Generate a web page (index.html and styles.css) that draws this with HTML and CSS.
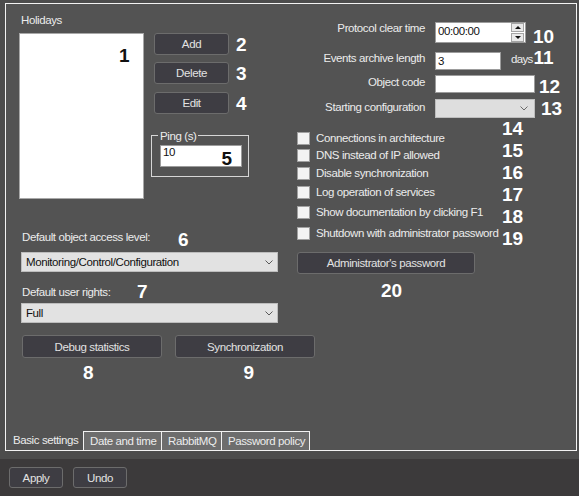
FILE: index.html
```html
<!DOCTYPE html>
<html>
<head>
<meta charset="utf-8">
<link rel="stylesheet" href="styles.css">
</head>
<body>
<div class="main">
  <div class="panel">
    <div class="content">
      <div class="left">
        <div class="holidays">Holidays</div>
        <div class="hol-row">
          <div class="listbox"><span class="ann ann1">1</span></div>
          <div class="hbtns">
            <div class="brow"><div class="btn b75">Add</div><span class="num nside">2</span></div>
            <div class="brow m7"><div class="btn b75">Delete</div><span class="num nside">3</span></div>
            <div class="brow m8"><div class="btn b75">Edit</div><span class="num nside">4</span></div>
            <div class="group">
              <span class="legend">Ping (s)</span>
              <div class="tbox ping-in">10<span class="ann ann5">5</span></div>
            </div>
          </div>
        </div>
        <div class="lrow r-access"><span class="ltext w-access">Default object access level:</span><span class="num n6">6</span></div>
        <div class="select s-left s1"><span>Monitoring/Control/Configuration</span><svg class="chev" width="8" height="5" viewBox="0 0 8 5"><path d="M0.5 0.5 L4 4 L7.5 0.5" fill="none" stroke="#5a5a5a" stroke-width="1"/></svg></div>
        <div class="lrow r-rights"><span class="ltext w-rights">Default user rights:</span><span class="num n7">7</span></div>
        <div class="select s-left s2"><span>Full</span><svg class="chev" width="8" height="5" viewBox="0 0 8 5"><path d="M0.5 0.5 L4 4 L7.5 0.5" fill="none" stroke="#5a5a5a" stroke-width="1"/></svg></div>
        <div class="brow2"><div class="btn b140">Debug statistics</div><div class="btn b140">Synchronization</div></div>
        <div class="nrow"><span class="num">8</span><span class="num n9">9</span></div>
      </div>
      <div class="right">
        <div class="frow r1">
          <span class="flabel">Protocol clear time</span>
          <div class="tbox time"><span class="tval">00:00:00</span><div class="spin"><span class="sp"><i class="tri-up"></i></span><span class="sp"><i class="tri-down"></i></span></div></div>
          <span class="num n10">10</span>
        </div>
        <div class="frow r2">
          <span class="flabel">Events archive length</span>
          <div class="tbox arch">3</div>
          <span class="days">days</span>
          <span class="num n11">11</span>
        </div>
        <div class="frow r3">
          <span class="flabel">Object code</span>
          <div class="tbox code"></div>
          <span class="num n12">12</span>
        </div>
        <div class="frow r4">
          <span class="flabel">Starting configuration</span>
          <div class="select s-conf"><span></span><svg class="chev" width="8" height="5" viewBox="0 0 8 5"><path d="M0.5 0.5 L4 4 L7.5 0.5" fill="none" stroke="#6a6a6a" stroke-width="1"/></svg></div>
          <span class="num n13">13</span>
        </div>
        <div class="checks">
          <div class="clist">
            <div class="chk c1"><span class="box"></span>Connections in architecture</div>
            <div class="chk c2"><span class="box"></span>DNS instead of IP allowed</div>
            <div class="chk c3"><span class="box"></span>Disable synchronization</div>
            <div class="chk c4"><span class="box"></span>Log operation of services</div>
            <div class="chk c5"><span class="box"></span>Show documentation by clicking F1</div>
            <div class="chk c6"><span class="box"></span>Shutdown with administrator password</div>
          </div>
          <div class="cnums">
            <span class="num">14</span>
            <span class="num">15</span>
            <span class="num">16</span>
            <span class="num">17</span>
            <span class="num">18</span>
            <span class="num">19</span>
          </div>
        </div>
        <div class="btn admin">Administrator's password</div>
        <div class="num n20">20</div>
      </div>
    </div>
    <div class="tabs">
      <div class="tab sel">Basic settings</div>
      <div class="tab t-date">Date and time</div>
      <div class="tab t-rabbit">RabbitMQ</div>
      <div class="tab t-pass">Password policy</div>
    </div>
  </div>
</div>
<div class="footer">
  <div class="btn fbtn">Apply</div>
  <div class="btn fbtn">Undo</div>
</div>
</body>
</html>
```

FILE: styles.css
```css
* { box-sizing: border-box; }
html, body { margin: 0; padding: 0; }
body {
  width: 579px;
  height: 496px;
  overflow: hidden;
  background: #4c4c4c;
  font-family: "Liberation Sans", Arial, sans-serif;
  font-size: 11.5px;
  letter-spacing: -0.4px;
  line-height: 14px;
  color: #ececec;
  display: flex;
  flex-direction: column;
}
.main {
  height: 459px;
  padding: 3px 0 0 5px;
}
.panel {
  width: 572px;
  height: 448px;
  border: 1px solid #f2f2f2;
  background: #535353;
  display: flex;
  flex-direction: column;
}
.content { flex: 1; display: flex; }
.left { width: 291px; flex: none; }
.right { flex: 1; padding-top: 18px; }

.num {
  font-family: "Liberation Sans", Arial, sans-serif;
  font-weight: bold;
  font-size: 19px;
  line-height: 19px;
  letter-spacing: 0;
  color: #ffffff;
}
.ann {
  position: absolute;
  font-family: "Liberation Sans", Arial, sans-serif;
  font-weight: bold;
  font-size: 19px;
  line-height: 19px;
  letter-spacing: 0;
  color: #111;
}

.btn {
  background: #3e3d43;
  border: 1px solid #6c6c6c;
  border-radius: 3px;
  color: #e2e2e2;
  display: flex;
  align-items: center;
  justify-content: center;
  white-space: nowrap;
}
.tbox {
  background: #ffffff;
  border: 1px solid #9c9c9c;
  color: #111;
}
.select {
  background: #e2e2e2;
  border: 1px solid #bdbdbd;
  color: #111;
  display: flex;
  align-items: center;
  justify-content: space-between;
  padding: 0 4px 0 4px;
}
.chev { display: block; }

/* left column */
.holidays { margin-top: 9px; padding-left: 15px; }
.hol-row { display: flex; margin-top: 6px; padding-left: 13px; }
.listbox {
  position: relative;
  width: 125px;
  height: 166px;
  background: #fff;
  border: 1px solid #a8a8a8;
}
.ann1 { left: 99px; top: 12px; }
.hbtns { margin-left: 10px; display: flex; flex-direction: column; }
.brow { display: flex; align-items: center; height: 22px; }
.brow.m7 { margin-top: 7px; }
.brow.m8 { margin-top: 8px; }
.b75 { width: 75px; height: 22px; }
.nside { margin-left: 7px; }
.group {
  position: relative;
  margin-top: 21px;
  margin-left: -3px;
  width: 98px;
  height: 42px;
  border: 1px solid #d6d6d6;
  padding: 9px 0 0 8px;
}
.legend {
  position: absolute;
  top: -7px;
  left: 6px;
  padding: 0 2px;
  background: #535353;
  color: #ececec;
}
.ping-in {
  position: relative;
  width: 82px;
  height: 22px;
  padding-left: 2px;
  line-height: 13px;
}
.ann5 { right: 9px; top: 3px; }

.lrow { display: flex; align-items: flex-start; padding-left: 16px; height: 14px; }
.ltext { flex: none; white-space: nowrap; }
.w-access { width: 156px; }
.w-rights { width: 115px; }
.r-access { margin-top: 31px; }
.n6 { margin-top: 0; }
.s-left { margin-left: 15px; width: 257px; height: 20px; }
.s1 { margin-top: 8px; }
.r-rights { margin-top: 13px; }
.n7 { margin-top: -3px; }
.s2 { margin-top: 4px; }
.brow2 { display: flex; gap: 13px; margin-top: 12px; padding-left: 16px; }
.b140 { width: 140px; height: 23px; flex: none; }
.nrow { display: flex; margin-top: 5px; padding-left: 77px; }
.n9 { margin-left: 150px; }

/* right column */
.frow { display: flex; align-items: flex-start; }
.flabel { width: 128px; flex: none; text-align: right; margin-right: 10px; white-space: nowrap; }
.r1 { height: 21px; }
.r1 .flabel { margin-top: -1px; }
.time {
  width: 91px;
  height: 21px;
  display: flex;
  justify-content: space-between;
  padding: 0 1px 0 2px;
}
.tval { line-height: 17px; }
.spin { display: flex; flex-direction: column; gap: 1px; }
.sp {
  width: 13px;
  height: 9px;
  background: #e9e9e9;
  border: 1px solid #a4a4a4;
  display: flex;
  align-items: center;
  justify-content: center;
}
.tri-up { width: 0; height: 0; border-left: 3px solid transparent; border-right: 3px solid transparent; border-bottom: 3px solid #111; }
.tri-down { width: 0; height: 0; border-left: 3px solid transparent; border-right: 3px solid transparent; border-top: 3px solid #111; }
.n10 { margin-left: 7px; margin-top: 4.5px; }

.r2 { margin-top: 9px; height: 18px; }
.r2 .flabel { margin-top: -1.5px; }
.arch { width: 66px; height: 18px; padding-left: 2px; line-height: 17px; }
.days { margin-left: 10px; letter-spacing: -0.7px; white-space: nowrap; }
.n11 { margin-left: 1px; margin-top: -3.8px; }

.r3 { margin-top: 5px; height: 18px; }
.code { width: 100px; height: 18px; }
.n12 { margin-left: 4px; margin-top: 1.5px; }

.r4 { margin-top: 6px; height: 19px; }
.r4 .flabel { margin-top: 1px; }
.s-conf { width: 100px; height: 19px; padding-right: 6px; background: #dedede; }
.n13 { margin-left: 6px; margin-top: -0.5px; }

.checks { display: flex; align-items: flex-start; }
.clist { width: 205px; flex: none; }
.chk { display: flex; align-items: center; height: 13px; line-height: 13px; white-space: nowrap; }
.box {
  width: 13px;
  height: 13px;
  flex: none;
  margin-right: 6px;
  background: #f3f3f3;
  border: 1px solid #a0a0a0;
}
.c1 { margin-top: 14px; }
.c2 { margin-top: 4px; }
.c3 { margin-top: 5px; }
.c4 { margin-top: 6px; }
.c5 { margin-top: 7px; }
.c6 { margin-top: 8px; }
.cnums { display: flex; flex-direction: column; }
.cnums .num { line-height: 22px; }
.admin { margin-top: 2px; width: 178px; height: 22px; }
.n20 { margin-top: 6.5px; margin-left: 84px; }

/* tabs */
.tabs { display: flex; height: 19px; flex: none; }
.tab { line-height: 18px; padding-left: 6px; white-space: nowrap; color: #ececec; overflow: hidden; }
.tab.sel { width: 77px; padding-left: 7px; }
.t-date, .t-rabbit, .t-pass {
  background: #6d6d6d;
  border-top: 1px solid #f2f2f2;
  border-left: 1px solid #f2f2f2;
}
.t-date { width: 78px; }
.t-rabbit { width: 60px; }
.t-pass { width: 89px; border-right: 1px solid #f2f2f2; }

/* footer */
.footer {
  flex: 1;
  background: #3c3a3b;
  display: flex;
  align-items: flex-start;
  gap: 10px;
  padding: 8px 9px;
}
.fbtn { width: 54px; height: 21px; }
```
